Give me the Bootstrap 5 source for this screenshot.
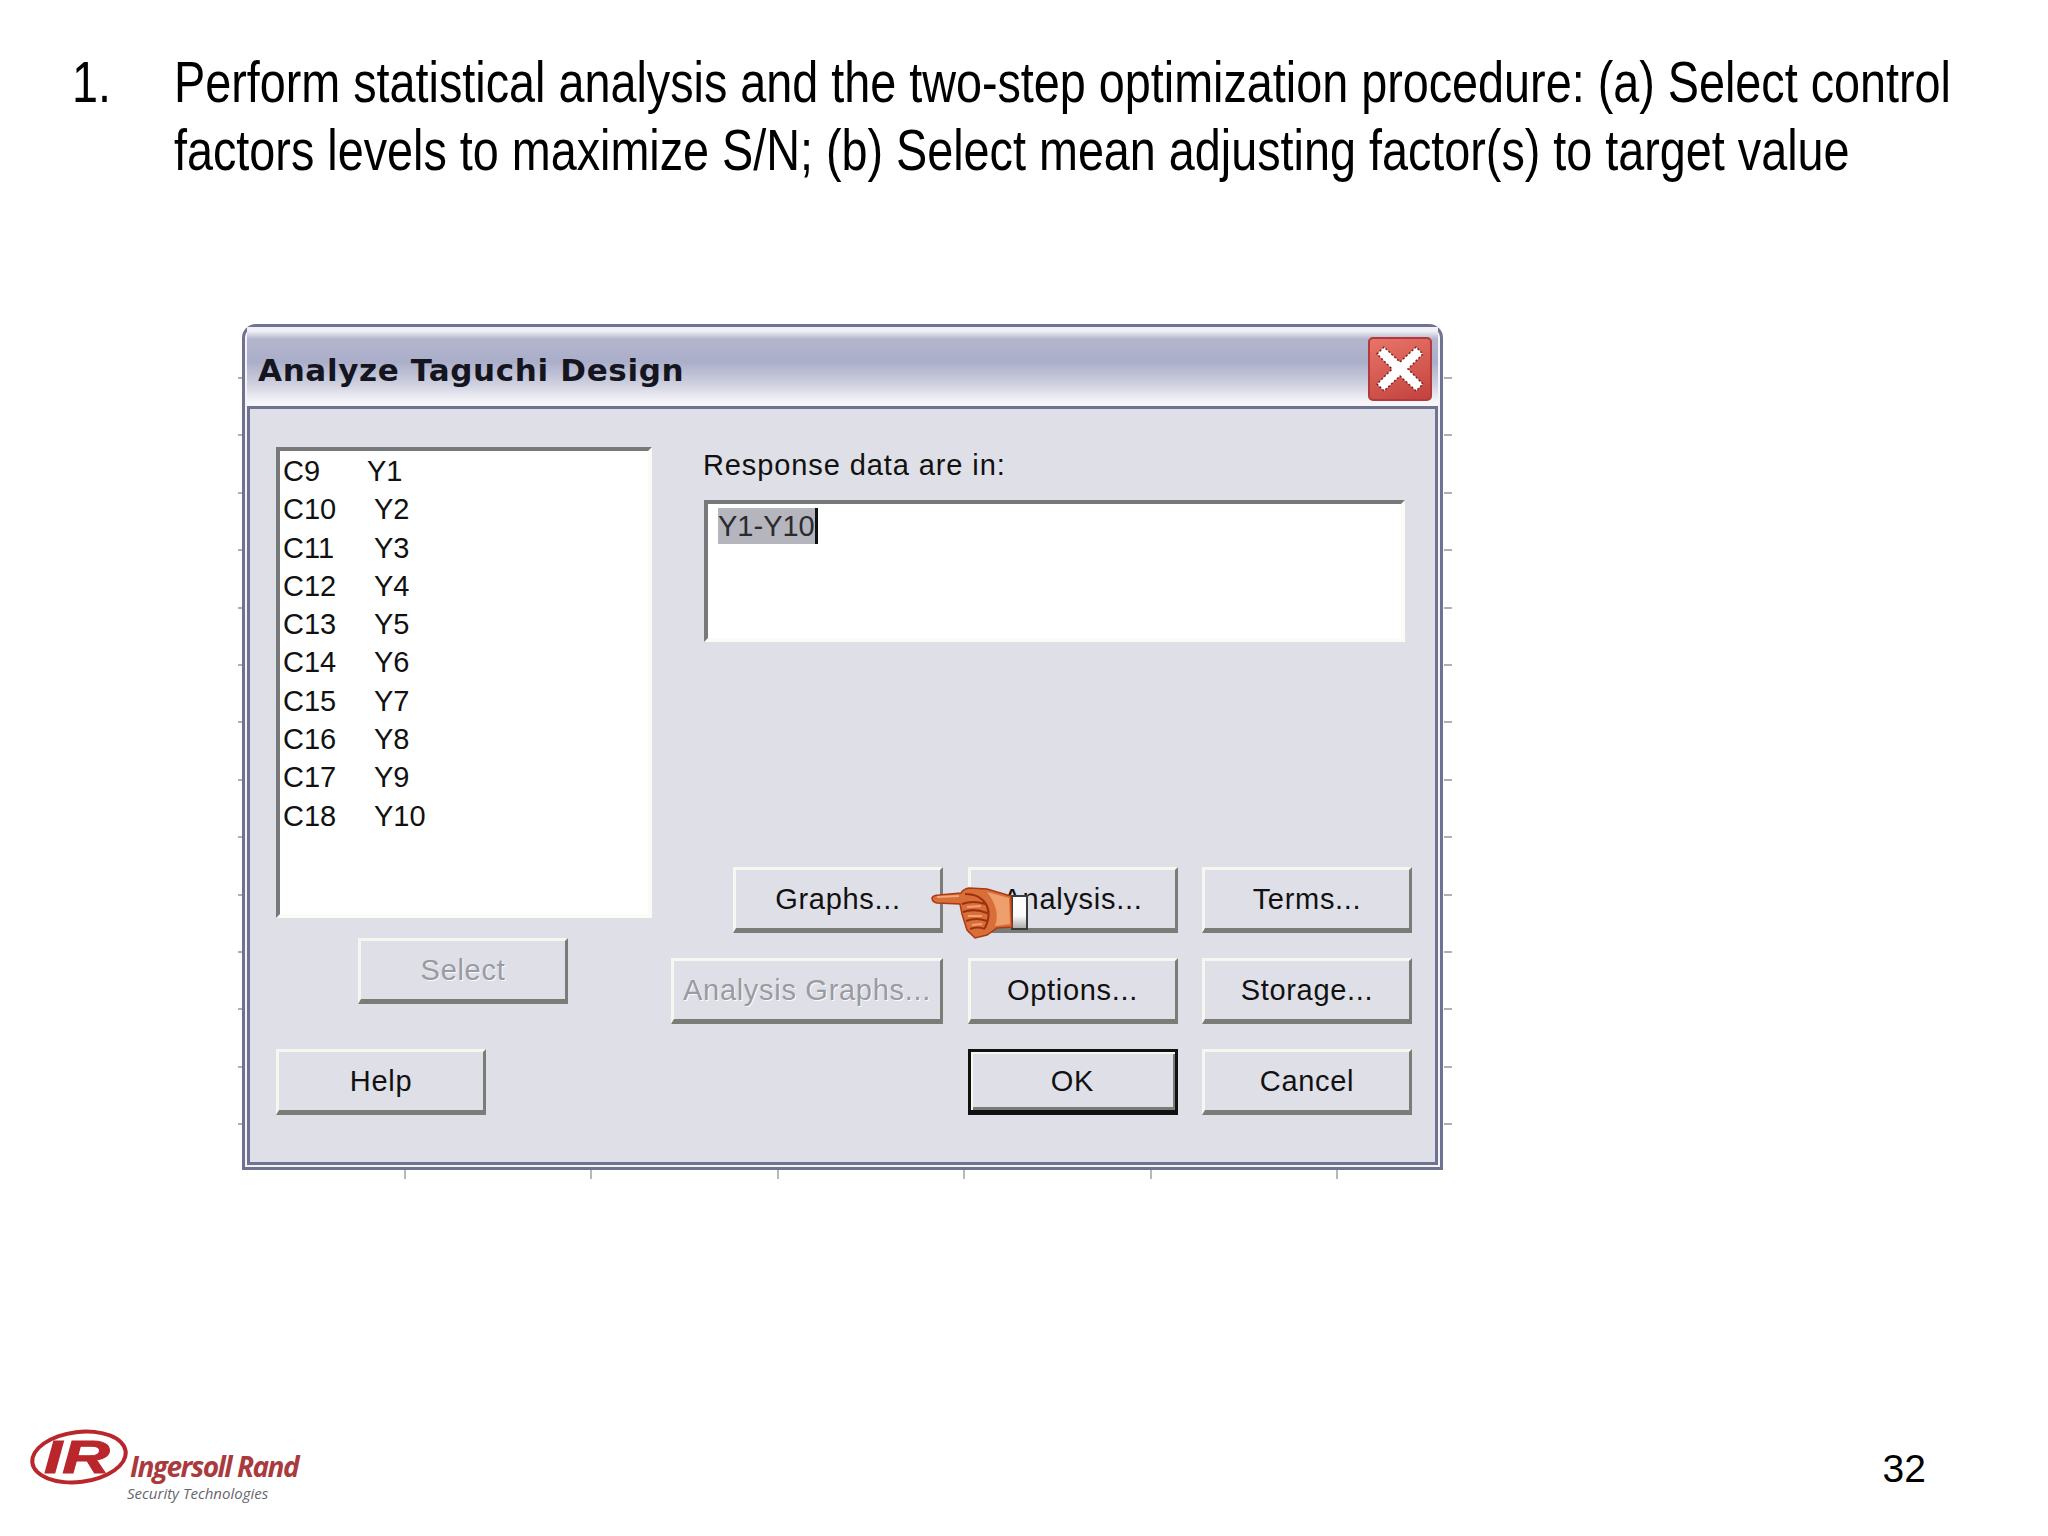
<!DOCTYPE html>
<html lang="en">
<head>
  <meta charset="UTF-8">
  <title>Analyze Taguchi Design</title>
  <link href="https://cdn.jsdelivr.net/npm/bootstrap@5.3.3/dist/css/bootstrap.min.css" rel="stylesheet">
  <style>
    body { background: #fff; color: #000; font-family: "Liberation Sans", Arial, sans-serif; }
    .slide { width: 2048px; height: 1536px; overflow: hidden; }
    .step-text { padding: 48px 0 0 72px; font-size: 57px; line-height: 68px; white-space: nowrap; }
    .step-num { width: 102px; flex: none; }
    /* the slide font is a squeezed Arial */
    .squeeze { transform: scaleX(.82); transform-origin: 0 0; }

    /* ticks of the chart behind the dialog */
    .dlg-ticks { margin: 140px 0 0 238px; width: 1214px; padding: 0 9px 9px 4px;
      background:
        repeating-linear-gradient(90deg, transparent 0 166px, #b8b8b8 166px 168px, transparent 168px 186.4px) 0 100% / 100% 9px no-repeat,
        repeating-linear-gradient(180deg, transparent 0 53px, #b0b0b0 53px 55px, transparent 55px 57.4px) 0 0 / 4px 100% no-repeat,
        repeating-linear-gradient(180deg, transparent 0 53px, #b0b0b0 53px 55px, transparent 55px 57.4px) 100% 0 / 8px 100% no-repeat; }
    .dlg-window { height: 846px; border: 3px solid #6f7290; border-radius: 14px 14px 0 0; background: #f4f4f8; padding: 0 2px 2px; }
    .dlg-title { height: 79px; padding: 4px 6px 0 11px; background: linear-gradient(180deg, #f0f1f6 0, #f0f1f6 4px, #b4b6ce 12px, #abaec9 35px, #d0d2e0 58px, #f6f6fa 75px); }
    .dlg-title-text { font-family: "DejaVu Sans", sans-serif; font-weight: 700; font-size: 31px; letter-spacing: .65px; color: #15151f; margin-top: 4px; }
    .dlg-close { width: 64px; height: 64px; background: linear-gradient(160deg, #e87468, #d2574f 60%, #c2413d); border: 2px solid #b23a3c; border-radius: 5px; }
    .dlg-client { height: 759px; background: #dfdfe7; border: 3px solid #6f7290; padding: 38px 26px 0 26px; font-size: 29px; line-height: 38.3px; color: #111; }

    .pick-list { width: 376px; height: 471px; background: #fff; padding: 1px 0 0 3px;
      border: 4px solid #fbfbf6; border-top-color: #77787a; border-left-color: #77787a; }
    .pick-row { display: flex; }
    .pick-col { width: 91px; }
    .pick-col-short { width: 84px; }

    .resp-label { margin: 0 0 17px 32px; line-height: 36px; letter-spacing: .9px; }
    .resp-box { width: 701px; height: 142px; margin-left: 33px; background: #fff; padding: 3px 0 0 10px;
      border: 4px solid #fbfbf6; border-top-color: #77787a; border-left-color: #77787a; }
    .resp-sel { background: #b4b5bd; color: #2b2b30; border-right: 3px solid #111; display: inline-block; height: 36px; line-height: 36px; }

    .win-btn { height: 66px; padding: 0; background: #dfdfe7; color: #111; font-size: 29px; line-height: 1; letter-spacing: .7px;
      border: 3px solid; border-color: #f7f7f0 #7b7b78 #7b7b78 #f7f7f0; border-bottom-width: 5px; border-radius: 0; }
    .btn.win-btn:disabled { color: #9a9aa2; background: #dfdfe7; opacity: 1; text-shadow: 1px 1px 0 #fafafa;
      border-color: #f7f7f0 #7b7b78 #7b7b78 #f7f7f0; }
    .win-btn-wide { width: 210px; }
    .win-btn-ok { border: 3px solid #111; border-bottom-width: 5px; box-shadow: inset 2px 2px 0 #f7f7f0, inset -2px -3px 0 #7b7b78; }

    .btn-block-select { margin: 20px 0 0 82px; }
    .btn-block-help { margin-top: 45px; }
    .btn-right { width: 741px; margin-left: 19px; }
    .btn-grid { display: grid; grid-template-columns: 272px 210px 210px; column-gap: 24.5px; row-gap: 25px; margin-top: 225px; }
    .btn-gap-third { grid-column: 2; }
    .btn-graphs { justify-self: end; width: 210px; }

    .hand-over { position: relative; }
    .hand-icon { position: absolute; left: -43px; top: 9px; width: 110px; height: 70px; }

    .slide-foot { padding: 0 122px 0 30px; margin-top: 250px; }
    .logo-mark { width: 98px; height: 60px; position: relative; margin: -2px 0 0; }
    .logo-ring { position: absolute; left: 0; top: 0; width: 98px; height: 60px; }
    .logo-ir { position: absolute; left: 14px; top: 4px; font: italic 700 47px/52px "Liberation Sans", sans-serif; color: #b9262c;
      -webkit-text-stroke: 1px #b9262c; transform: scaleX(1.4); transform-origin: 0 0; }
    .logo-name { font: italic 700 28px/30px "Open Sans", sans-serif; color: #a93a3e; letter-spacing: -1.5px; margin: 22px 0 0 2px; }
    .logo-sub { font: italic 400 15px/20px "Open Sans", sans-serif; color: #66666e; margin: 2px 0 0 -1px; }
    .page-no { font-size: 39px; line-height: 46px; margin-bottom: 11px; }
  </style>
</head>
<body>
  <div class="slide d-flex flex-column">
    <div class="step-text d-flex">
      <div class="step-num"><div class="squeeze">1.</div></div>
      <div class="squeeze">Perform statistical analysis and the two-step optimization procedure: (a) Select control<br>factors levels to maximize S/N; (b) Select mean adjusting factor(s) to target value</div>
    </div>

    <div class="dlg-ticks">
      <div class="dlg-window">
        <div class="dlg-title d-flex align-items-center justify-content-between">
          <span class="dlg-title-text">Analyze Taguchi Design</span>
          <span class="dlg-close d-flex align-items-center justify-content-center">
            <svg width="58" height="58" viewBox="0 0 58 58">
              <path d="M6 14 L13 7 L29 22 L45 7 L52 14 L37 29 L52 44 L45 51 L29 36 L13 51 L6 44 L21 29 Z" fill="#fff" stroke="#7a2020" stroke-width="1.5" stroke-dasharray="2 2"/>
            </svg>
          </span>
        </div>
        <div class="dlg-client d-flex">
          <div>
            <div class="pick-list">
              <div class="pick-row"><span class="pick-col-short">C9</span><span>Y1</span></div>
              <div class="pick-row"><span class="pick-col">C10</span><span>Y2</span></div>
              <div class="pick-row"><span class="pick-col">C11</span><span>Y3</span></div>
              <div class="pick-row"><span class="pick-col">C12</span><span>Y4</span></div>
              <div class="pick-row"><span class="pick-col">C13</span><span>Y5</span></div>
              <div class="pick-row"><span class="pick-col">C14</span><span>Y6</span></div>
              <div class="pick-row"><span class="pick-col">C15</span><span>Y7</span></div>
              <div class="pick-row"><span class="pick-col">C16</span><span>Y8</span></div>
              <div class="pick-row"><span class="pick-col">C17</span><span>Y9</span></div>
              <div class="pick-row"><span class="pick-col">C18</span><span>Y10</span></div>
            </div>
            <div class="btn-block-select"><button class="btn win-btn win-btn-wide" disabled>Select</button></div>
            <div class="btn-block-help"><button class="btn win-btn win-btn-wide">Help</button></div>
          </div>
          <div class="btn-right">
            <div class="resp-label">Response data are in:</div>
            <div class="resp-box"><span class="resp-sel">Y1-Y10</span></div>
            <div class="btn-grid">
              <button class="btn win-btn btn-graphs">Graphs...</button>
              <div class="hand-over">
                <button class="btn win-btn w-100">Analysis...</button>
                <svg class="hand-icon" viewBox="0 0 110 70">
                  <defs>
                    <linearGradient id="cuffFade" x1="0" y1="0" x2="0" y2="1">
                      <stop offset="0" stop-color="#fff"/>
                      <stop offset=".6" stop-color="#fafafa"/>
                      <stop offset="1" stop-color="#a8a8a8"/>
                    </linearGradient>
                  </defs>
                  <!-- cuff -->
                  <path d="M87 20 H102 V53 H87 Z" fill="url(#cuffFade)" stroke="#3c3c3c" stroke-width="2"/>
                  <!-- hand -->
                  <path d="M7 22 Q8 19 14 19 L36 17 Q38 13 44 12 L62 13 L86 20 L87 51 L72 52 L62 59 L50 62 L42 54 L37 38 L35 28 L12 27 Q7 26 7 22 Z" fill="#d96f38" stroke="#a83a14" stroke-width="1.5"/>
                  <path d="M62 16 L84 22 L85 48 L70 50 Q76 34 62 16 Z" fill="#ee9f6c"/>
                  <path d="M12 21 L34 20" stroke="#f2a878" stroke-width="2"/>
                  <!-- curled fingers -->
                  <path d="M37 28 Q48 24 60 28 M38 36 Q50 32 62 37 M41 45 Q51 41 62 45 M45 53 Q53 50 60 53 M40 18 Q56 18 62 30 Q66 40 60 52" fill="none" stroke="#9c3010" stroke-width="2.2"/>
                  <path d="M42 31 L56 30 M43 40 L57 40 M47 49 L57 48" stroke="#f0a274" stroke-width="2"/>
                </svg>
              </div>
              <button class="btn win-btn">Terms...</button>
              <button class="btn win-btn" disabled>Analysis Graphs...</button>
              <button class="btn win-btn">Options...</button>
              <button class="btn win-btn">Storage...</button>
              <button class="btn win-btn win-btn-ok btn-gap-third">OK</button>
              <button class="btn win-btn">Cancel</button>
            </div>
          </div>
        </div>
      </div>
    </div>

    <div class="slide-foot d-flex justify-content-between align-items-end">
      <div class="d-flex">
        <div class="logo-mark">
          <svg class="logo-ring" viewBox="0 0 98 60">
            <ellipse cx="49" cy="30" rx="49" ry="27" transform="rotate(-7 49 30)" fill="#b9262c"/>
            <ellipse cx="49" cy="30" rx="45" ry="23" transform="rotate(-7 49 30)" fill="#fff"/>
          </svg>
          <span class="logo-ir">IR</span>
        </div>
        <div>
          <div class="logo-name">Ingersoll Rand</div>
          <div class="logo-sub">Security Technologies</div>
        </div>
      </div>
      <div class="page-no">32</div>
    </div>
  </div>
</body>
</html>
